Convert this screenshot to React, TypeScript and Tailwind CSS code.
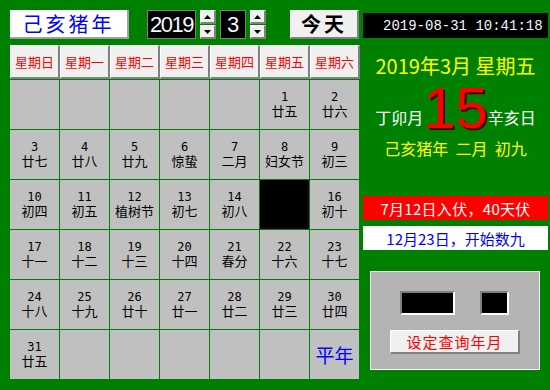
import React from "react";

const weekdays = ["星期日", "星期一", "星期二", "星期三", "星期四", "星期五", "星期六"];

type Cell = { d?: number; l?: string; sel?: boolean; note?: string };

const cells: Cell[] = [
  {}, {}, {}, {}, {}, { d: 1, l: "廿五" }, { d: 2, l: "廿六" },
  { d: 3, l: "廿七" }, { d: 4, l: "廿八" }, { d: 5, l: "廿九" }, { d: 6, l: "惊蛰" }, { d: 7, l: "二月" }, { d: 8, l: "妇女节" }, { d: 9, l: "初三" },
  { d: 10, l: "初四" }, { d: 11, l: "初五" }, { d: 12, l: "植树节" }, { d: 13, l: "初七" }, { d: 14, l: "初八" }, { sel: true }, { d: 16, l: "初十" },
  { d: 17, l: "十一" }, { d: 18, l: "十二" }, { d: 19, l: "十三" }, { d: 20, l: "十四" }, { d: 21, l: "春分" }, { d: 22, l: "十六" }, { d: 23, l: "十七" },
  { d: 24, l: "十八" }, { d: 25, l: "十九" }, { d: 26, l: "廿十" }, { d: 27, l: "廿一" }, { d: 28, l: "廿二" }, { d: 29, l: "廿三" }, { d: 30, l: "廿四" },
  { d: 31, l: "廿五" }, {}, {}, {}, {}, {}, { note: "平年" },
];

const raised =
  "bg-[#f0f0f0] border-t border-l border-white border-r-2 border-b-2 border-r-[#808080] border-b-[#808080]";

function Spinner() {
  return (
    <div className="flex flex-col w-[16px] h-[29px] gap-px">
      {/* up */}
      <div className={`${raised} flex-1 flex items-center justify-center`}>
        <svg width="7" height="4" viewBox="0 0 7 4">
          <polygon points="3.5,0 7,4 0,4" fill="#000" />
        </svg>
      </div>
      {/* down */}
      <div className={`${raised} flex-1 flex items-center justify-center`}>
        <svg width="7" height="4" viewBox="0 0 7 4">
          <polygon points="0,0 7,0 3.5,4" fill="#000" />
        </svg>
      </div>
    </div>
  );
}

export default function App() {
  return (
    <div className="w-[550px] h-[390px] bg-[#008000] flex font-['Noto_Sans_CJK_SC',sans-serif] overflow-hidden">
      {/* Left: calendar */}
      <div className="flex flex-col pl-[10px] pt-[10px] w-[360px]">
        {/* Top controls */}
        <div className="flex items-start h-[29px]">
          <div className="w-[119px] h-[29px] bg-white border-r-2 border-b-2 border-r-[#a0a0a0] border-b-[#a0a0a0] flex items-center justify-center text-[20px] leading-none tracking-[3px] text-[#0000ff]">
            己亥猪年
          </div>
          <div className="ml-[18px] w-[49px] h-[29px] bg-black border border-[#808080] flex items-center justify-center font-['Liberation_Sans',sans-serif] text-[22px] tracking-[-1.5px] text-[#f4f8ff] leading-none">
            2019
          </div>
          <div className="ml-[4px]">
            <Spinner />
          </div>
          <div className="ml-[4px] w-[26px] h-[29px] bg-black border border-[#808080] flex items-center justify-center font-['Liberation_Sans',sans-serif] text-[22px] text-[#f4f8ff] leading-none">
            3
          </div>
          <div className="ml-[4px]">
            <Spinner />
          </div>
          <button className={`${raised} ml-[24px] w-[69px] h-[29px] flex items-center justify-center text-[20px] font-bold tracking-[3px] text-black leading-none`}>
            今天
          </button>
        </div>

        {/* Weekday header */}
        <div className="flex mt-[6px]">
          {weekdays.map((w) => (
            <div
              key={w}
              className={`${raised} w-[50px] h-[34px] flex items-center justify-center text-[13px] text-[#ff0000] leading-none`}
            >
              {w}
            </div>
          ))}
        </div>

        {/* Day grid */}
        <div className="mt-[1px] grid grid-cols-[repeat(7,49px)] grid-rows-[repeat(6,49px)] gap-px">
          {cells.map((c, i) => (
            <div
              key={i}
              className={`flex flex-col items-center justify-center ${c.sel ? "bg-black" : "bg-[#c0c0c0]"}`}
            >
              {c.d !== undefined && (
                <>
                  <span className="font-['DejaVu_Sans_Mono',monospace] text-[12px] leading-[13px] text-black">
                    {c.d}
                  </span>
                  <span className="text-[13px] leading-[14px] text-black">{c.l}</span>
                </>
              )}
              {c.note && <span className="text-[19px] leading-none text-[#0000ff]">{c.note}</span>}
            </div>
          ))}
        </div>
      </div>

      {/* Right: info panel */}
      <div className="ml-[3px] w-[185px] flex flex-col pt-[13px]">
        <div className="h-[25px] bg-black flex items-center pl-[20px] font-['Liberation_Mono',monospace] text-[14px] text-[#eef6ff] leading-none">
          2019-08-31 10:41:18
        </div>

        <div className="mt-[18px] text-center text-[20px] leading-none text-[#ffff00] whitespace-pre">
          2019年3月 星期五
        </div>

        <div className="mt-[3px] flex justify-center items-start h-[58px]">
          <span className="mt-[30px] text-[16px] leading-none text-white">丁卯月</span>
          <span className="font-['Liberation_Sans',sans-serif] text-[58px] leading-none text-[#ff0000] [text-shadow:2px_2px_0_#400000]">
            15
          </span>
          <span className="mt-[30px] text-[16px] leading-none text-white">辛亥日</span>
        </div>

        <div className="mt-[3px] text-center text-[16px] leading-none text-[#ffff00] whitespace-pre">
          己亥猪年  二月  初九
        </div>

        <div className="mt-[40px] h-[24px] bg-[#ff0000] flex items-center justify-center text-[15px] leading-none text-white tracking-[0.3px]">
          7月12日入伏，40天伏
        </div>
        <div className="mt-[6px] h-[24px] bg-white flex items-center justify-center text-[15px] leading-none text-[#0000ff]">
          12月23日，开始数九
        </div>

        {/* Query box */}
        <div className="mt-[21px] ml-[7px] w-[170px] h-[99px] bg-[#b4b4b4] border border-white flex flex-col">
          <div className="flex mt-[19px] ml-[29px]">
            <div className="w-[55px] h-[24px] bg-black border-t-2 border-l-2 border-[#808080] border-r-2 border-b-2 border-r-white border-b-white" />
            <div className="ml-[25px] w-[29px] h-[24px] bg-black border-t-2 border-l-2 border-[#808080] border-r-2 border-b-2 border-r-white border-b-white" />
          </div>
          <button
            className={`${raised} mt-[15px] ml-[19px] w-[130px] h-[24px] flex items-center justify-center text-[15px] leading-none text-[#ff0000] tracking-[1px]`}
          >
            设定查询年月
          </button>
        </div>
      </div>
    </div>
  );
}
